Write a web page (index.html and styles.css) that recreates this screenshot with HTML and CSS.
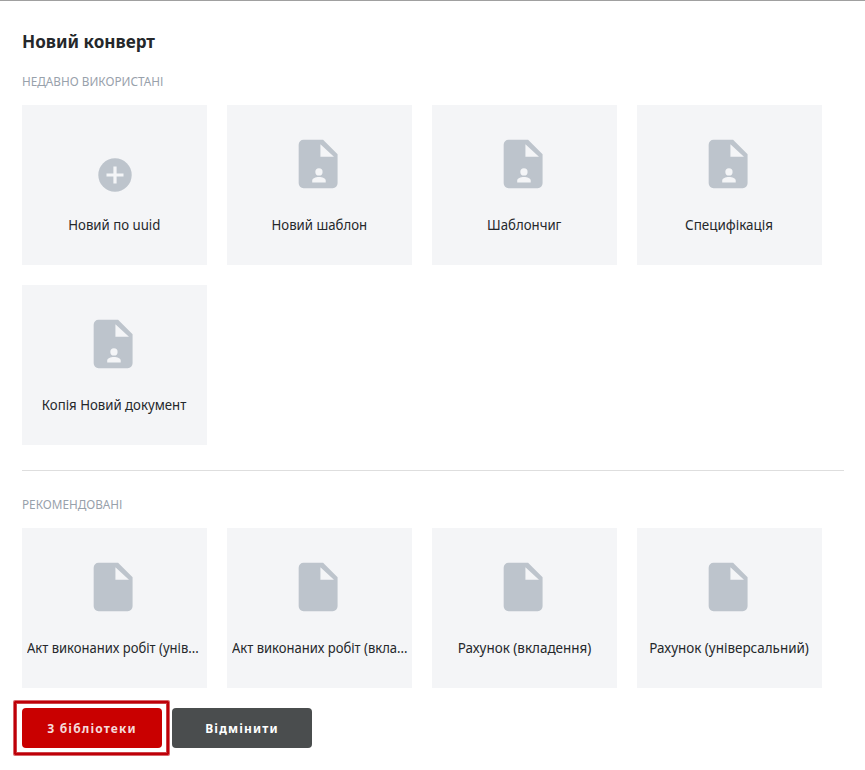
FILE: index.html
```html
<!DOCTYPE html>
<html lang="uk">
<head>
<meta charset="utf-8">
<title>Новий конверт</title>
<link rel="stylesheet" href="styles.css">
</head>
<body>
<svg class="defs" width="0" height="0">
<symbol id="file" viewBox="0 0 24 24"><path fill="#bdc4cc" fill-rule="evenodd" d="M13 9V3.8L18.6 9ZM6 2a2 2 0 0 0-2 2v16a2 2 0 0 0 2 2h12.100a2 2 0 0 0 2-2V8l-6-6z"/></symbol>
<symbol id="person" viewBox="0 0 24 24"><use href="#file"/><g fill="#f4f5f7"><circle cx="12.400" cy="15.300" r="1.500"/><path d="M9.600 19.700v-.8c0-1.050 1.400-1.550 2.800-1.550s2.800.5 2.800 1.550v.8z"/></g></symbol>
</svg>
<main class="dialog">
<h1><span>Новий конверт</span></h1>
<h2 class="recent"><span>НЕДАВНО ВИКОРИСТАНІ</span></h2>
<section class="grid">
<article class="card"><div class="icon"><svg class="plus" viewBox="0 0 34 34"><circle cx="17" cy="17" r="16.700" fill="#bdc4cc"/><path d="M17 8.500v17M8.500 17h17" stroke="#f4f5f7" stroke-width="3.200"/></svg></div><p class="snug"><span>Новий по uuid</span></p></article>
<article class="card"><div class="icon"><svg><use href="#person"/></svg></div><p class="snug"><span>Новий шаблон</span></p></article>
<article class="card"><div class="icon"><svg><use href="#person"/></svg></div><p class="snug"><span>Шаблончиг</span></p></article>
<article class="card"><div class="icon"><svg><use href="#person"/></svg></div><p><span>Специфікація</span></p></article>
<article class="card"><div class="icon"><svg><use href="#person"/></svg></div><p class="snug"><span>Копія Новий документ</span></p></article>
</section>
<hr>
<h2 class="recommended"><span>РЕКОМЕНДОВАНІ</span></h2>
<section class="grid">
<article class="card"><div class="icon"><svg><use href="#file"/></svg></div><p class="clipped"><span>Акт виконаних робіт (унів...</span></p></article>
<article class="card"><div class="icon"><svg><use href="#file"/></svg></div><p class="clipped"><span>Акт виконаних робіт (вкла...</span></p></article>
<article class="card"><div class="icon"><svg><use href="#file"/></svg></div><p><span>Рахунок (вкладення)</span></p></article>
<article class="card"><div class="icon"><svg><use href="#file"/></svg></div><p><span>Рахунок (універсальний)</span></p></article>
</section>
<footer>
<div class="focus"><button class="primary">З бібліотеки</button></div>
<button class="cancel">Відмінити</button>
</footer>
</main>
</body>
</html>
```
FILE: styles.css
```css
* { box-sizing: border-box; }
body { margin: 0; background: #fff; font-family: "Noto Sans", sans-serif; color: #25282b; }
.defs { display: block; }
.dialog { height: 770px; border-top: 1px solid #a0a0a0; padding: 26px 21px 0 22px; overflow: hidden; }
h1, h2, p { margin: 0; white-space: nowrap; }
h1 span, h2 span, p span { display: inline-block; transform-origin: left center; }
h1 { font-size: 18px; line-height: 28px; font-weight: 700; }
h2 { font-size: 13px; line-height: 20px; font-weight: 400; color: #98a1ab; }
h2 span { transform: scaleX(.905); }
h1 span { transform: scaleX(.95); }
p span { transform: scaleX(.896); transform-origin: center; }
.snug span { transform: scaleX(.88); }
.clipped { align-self: flex-start; padding-left: 5px; }
.clipped span { transform: scaleX(.868); transform-origin: left center; }
.recent { margin: 16px 0 14px; }
.grid { display: grid; grid-template-columns: repeat(4, 185px); gap: 20px; }
.card { height: 160px; background: #f4f5f7; display: flex; flex-direction: column; align-items: center; }
.icon { width: 58px; height: 108px; padding-top: 30px; }
.icon svg { display: block; width: 58px; height: 58px; margin-left: -1.2px; }
.icon .plus { width: 34px; height: 34px; margin: 23px 0 0 12px; }
.card p { font-size: 15px; line-height: 22px; }
hr { border: 0; border-top: 1px solid #dedede; margin: 25px 0 23px; }
.recommended { margin-bottom: 14px; }
footer { display: flex; align-items: flex-start; gap: 3px; margin: 13px 0 0 -8px; }
.focus { border: 2px solid #be0008; border-radius: 1px; padding: 5px 5px 5px 6px; height: 54px; width: 155px; box-shadow: 0 0 0 1px #d8676b, inset 0 0 0 1px #cf4348; }
button { display: block; width: 140px; height: 40px; border: 0; border-radius: 4px; padding: 1px 0 0; color: #fff; font: 700 12px/40px "Noto Sans", sans-serif; letter-spacing: 1.15px; }
.primary { background: #c90000; color: #f5dada; }
.cancel { background: #4a4d4e; margin-top: 7px; }
```
